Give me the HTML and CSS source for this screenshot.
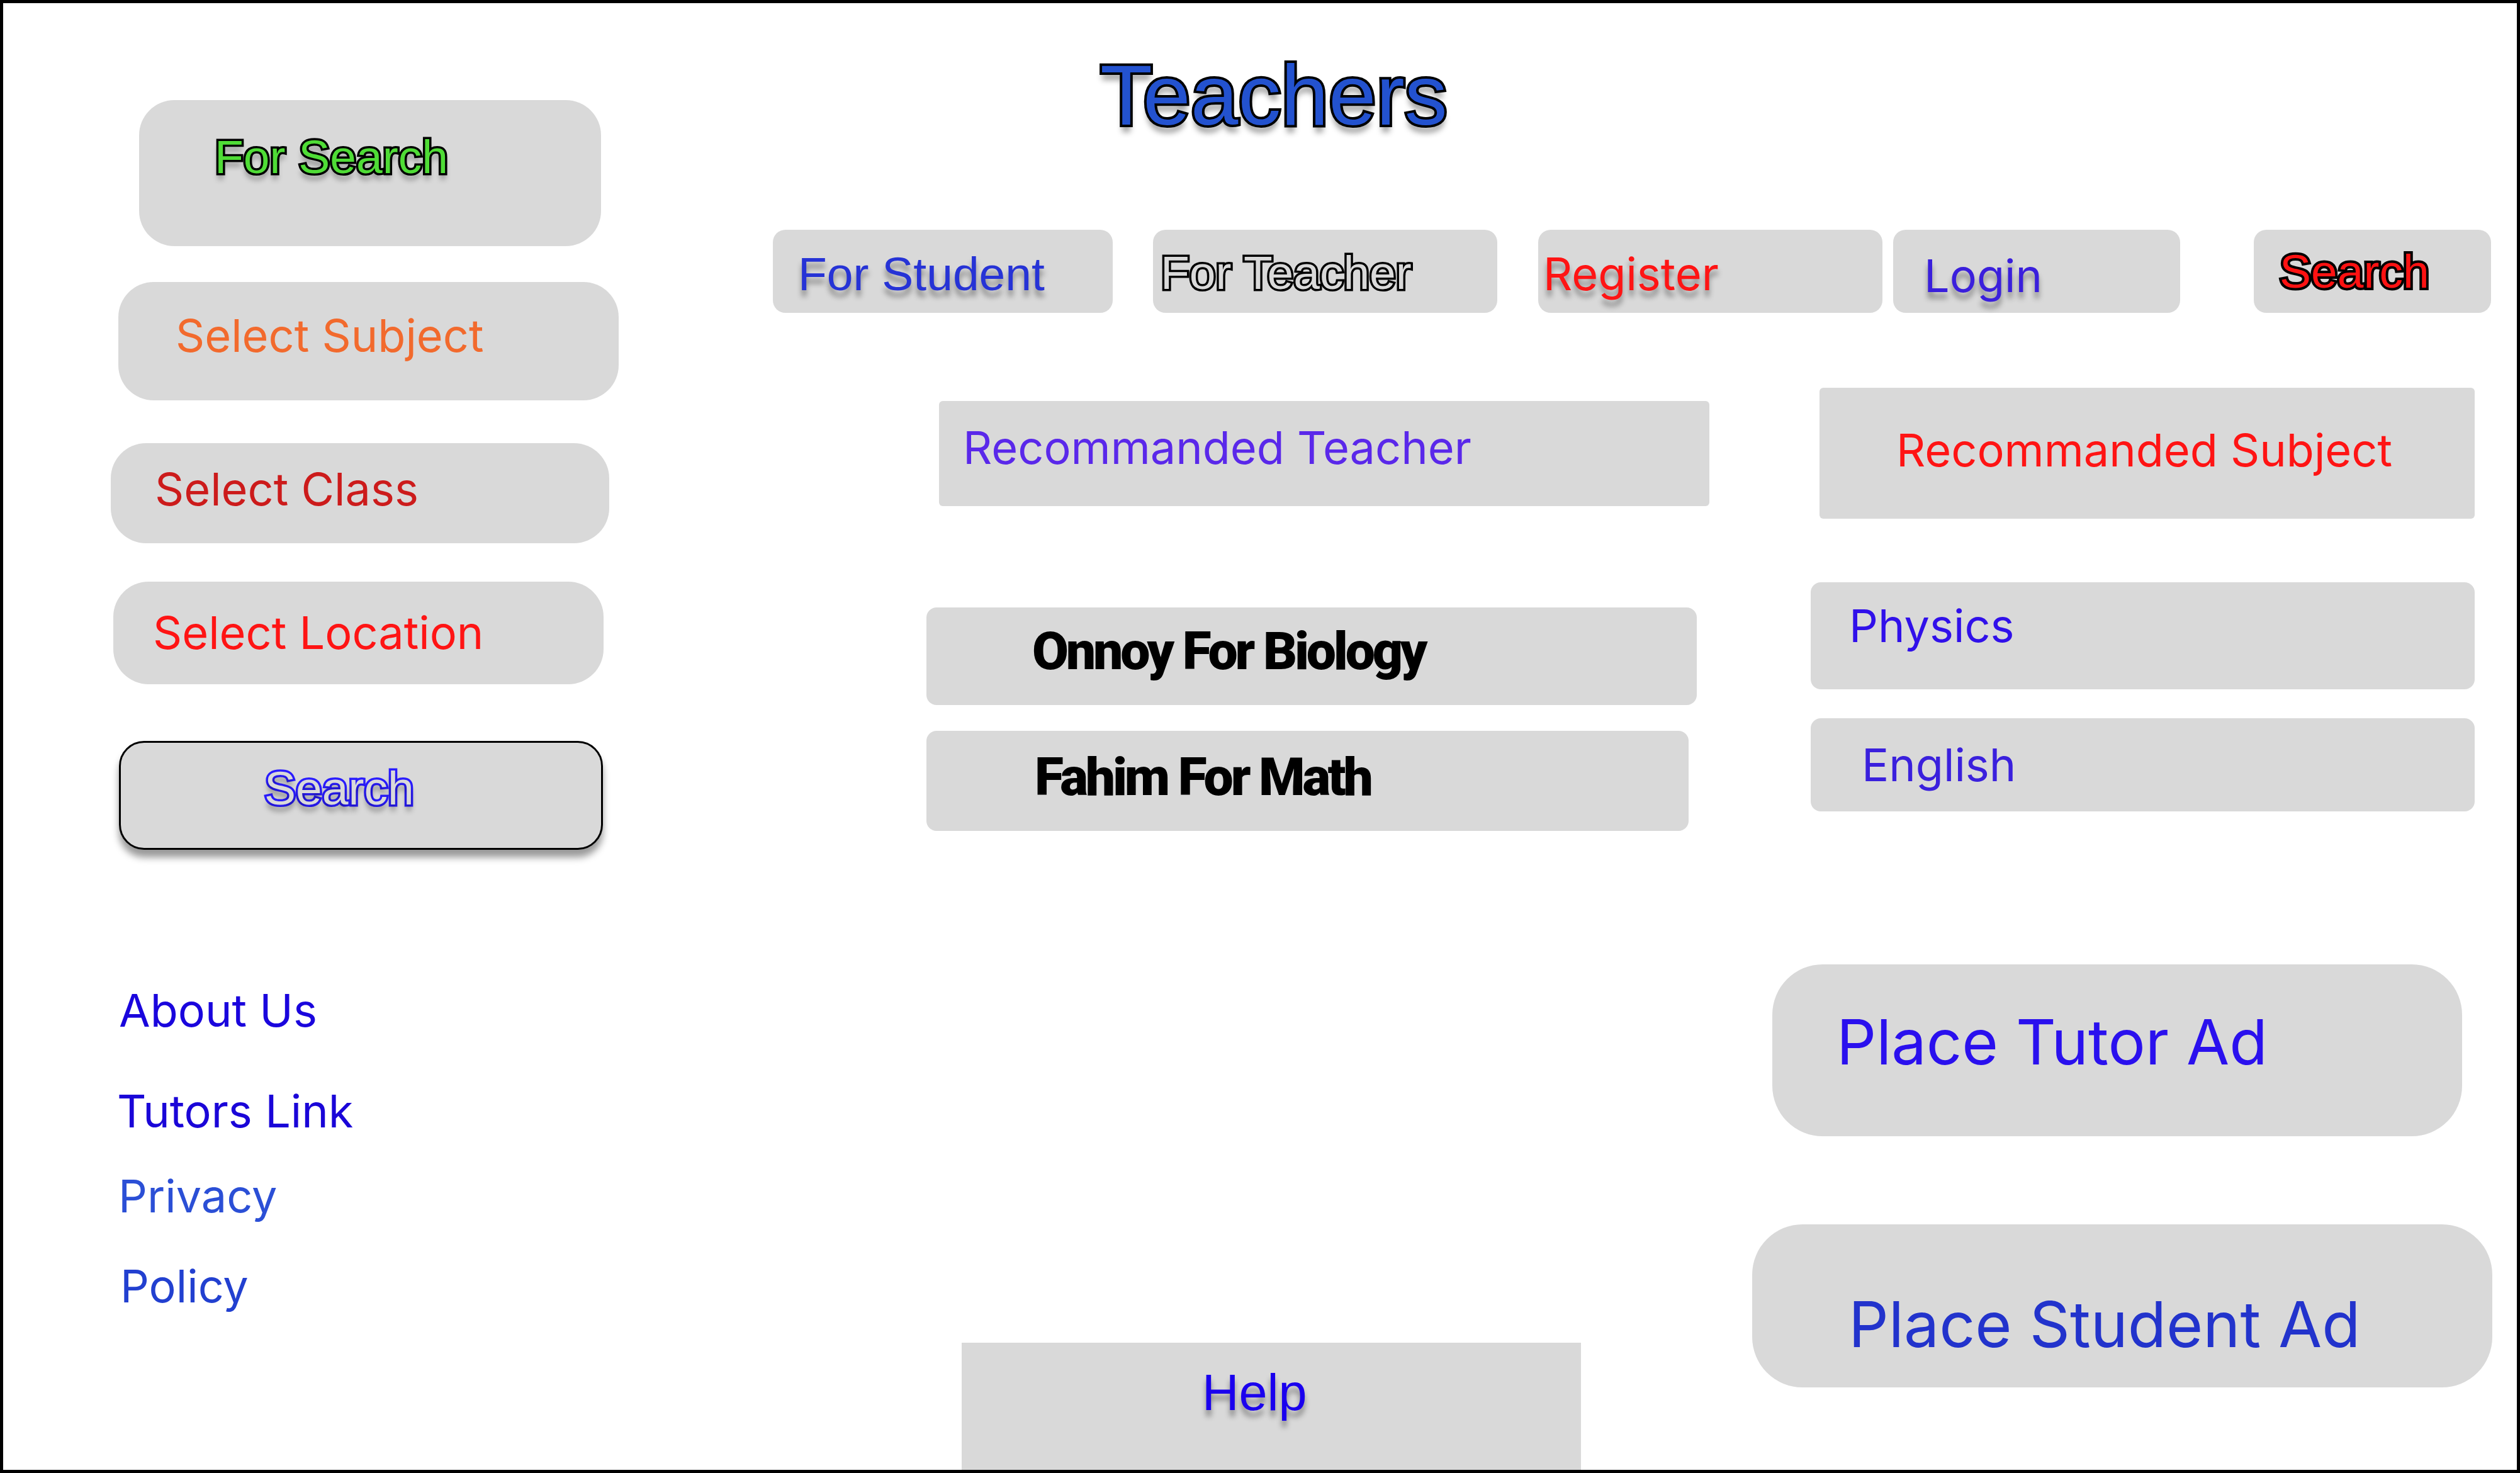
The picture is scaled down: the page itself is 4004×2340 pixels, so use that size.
FILE: index.html
```html
<!DOCTYPE html>
<html lang="en">
<head>
<meta charset="utf-8">
<title>Teachers</title>
<link rel="stylesheet" href="styles.css">
</head>
<body>
<div class="frame">
  <aside class="sidebar">
    <div class="box pill for-search"><span class="t arial outline-black green shadow">For Search</span></div>
    <div class="box pill sel-subject"><span class="t inter orange">Select Subject</span></div>
    <div class="box pill sel-class"><span class="t inter darkred">Select Class</span></div>
    <div class="box pill sel-location"><span class="t inter red">Select Location</span></div>
    <div class="box search-btn"><span class="t arial outline-blue shadow">Search</span></div>
    <nav class="links">
      <a class="link about">About Us</a>
      <a class="link tutors">Tutors Link</a>
      <a class="link privacy">Privacy</a>
      <a class="link policy">Policy</a>
    </nav>
  </aside>

  <main class="main">
    <h1 class="title">Teachers</h1>

    <div class="navrow">
      <div class="box tab tab-student"><span class="t arial blue shadow">For Student</span></div>
      <div class="box tab tab-teacher"><span class="t arial outline-black-thin">For Teacher</span></div>
      <div class="box tab tab-register"><span class="t inter red shadow">Register</span></div>
      <div class="box tab tab-login"><span class="t inter login shadow">Login</span></div>
      <div class="box tab tab-search"><span class="t arial outline-red">Search</span></div>
    </div>

    <div class="content">
      <section class="col-teachers">
        <div class="box rec-teacher"><span class="t inter purple">Recommanded Teacher</span></div>
        <div class="box card onnoy"><span class="t heavy">Onnoy For Biology</span></div>
        <div class="box card fahim"><span class="t heavy">Fahim For Math</span></div>
      </section>
      <section class="col-subjects">
        <div class="box rec-subject"><span class="t inter red">Recommanded Subject</span></div>
        <div class="box card physics"><span class="t inter subj1">Physics</span></div>
        <div class="box card english"><span class="t inter subj2">English</span></div>
      </section>
    </div>

    <div class="bottom">
      <div class="box help"><span class="t arial help-text shadow">Help</span></div>
      <div class="ads">
        <div class="box ad tutor-ad"><span class="t inter ad-text1">Place Tutor Ad</span></div>
        <div class="box ad student-ad"><span class="t inter ad-text2">Place Student Ad</span></div>
      </div>
    </div>
  </main>
</div>
</body>
</html>
```

FILE: styles.css
```css
html, body {
  margin: 0;
  padding: 0;
  background: #ffffff;
}

.frame {
  width: 4004px;
  height: 2340px;
  box-sizing: border-box;
  border: 5px solid #000000;
  background: #ffffff;
  display: flex;
  overflow: hidden;
}

/* generic */
.box {
  background: #d9d9d9;
  box-sizing: border-box;
  flex-shrink: 0;
}
.t {
  display: block;
  line-height: 1;
  white-space: nowrap;
}
.arial {
  font-family: "Liberation Sans", Arial, sans-serif;
  font-size: 75px;
}
.inter {
  font-family: Inter, "Noto Sans", sans-serif;
  font-size: 72px;
}
.heavy {
  font-family: Roboto, "Liberation Sans", sans-serif;
  font-weight: 900;
  font-size: 84px;
  letter-spacing: -0.05em;
  color: #000000;
}
.shadow {
  text-shadow: 0 10px 9px rgba(0, 0, 0, 0.38);
}

/* outlined texts */
.outline-black {
  -webkit-text-stroke: 7px #000000;
  paint-order: stroke fill;
}
.green { color: #4fdc36; }
.outline-blue {
  color: #d9d9d9;
  -webkit-text-stroke: 7px #2a1cff;
  paint-order: stroke fill;
}
.outline-black-thin {
  color: #d9d9d9;
  -webkit-text-stroke: 7px #000000;
  paint-order: stroke fill;
}
.outline-red {
  color: #ff1212;
  -webkit-text-stroke: 8px #000000;
  paint-order: stroke fill;
}

/* colours */
.orange { color: #f26a2d; }
.darkred { color: #cc1b1b; }
.red { color: #ff1414; }
.blue { color: #2633d6; }
.login { color: #3a1fdc; }
.purple { color: #5a28ea; }
.subj1 { color: #3010ea; }
.subj2 { color: #3a20dd; }

/* ---------- sidebar ---------- */
.sidebar {
  width: 1095px;
  flex-shrink: 0;
  display: flex;
  flex-direction: column;
  align-items: flex-start;
}
.pill { border-radius: 56px; }

.for-search {
  margin: 154px 0 0 216px;
  width: 734px;
  height: 232px;
  padding: 53px 0 0 120px;
}
.sel-subject {
  margin: 57px 0 0 183px;
  width: 795px;
  height: 188px;
  padding: 49px 0 0 91px;
}
.sel-class {
  margin: 68px 0 0 171px;
  width: 792px;
  height: 159px;
  padding: 37px 0 0 70px;
}
.sel-location {
  margin: 61px 0 0 175px;
  width: 779px;
  height: 163px;
  padding: 45px 0 0 63px;
}
.search-btn {
  margin: 90px 0 0 184px;
  width: 769px;
  height: 173px;
  border: 3px solid #000000;
  border-radius: 40px;
  padding: 35px 0 0 228px;
  box-shadow: 0 12px 12px rgba(0, 0, 0, 0.4);
}

.links {
  display: flex;
  flex-direction: column;
  align-items: flex-start;
}
.link {
  display: block;
  font-family: Inter, "Noto Sans", sans-serif;
  font-size: 72px;
  line-height: 1;
  white-space: nowrap;
}
.about { margin: 219px 0 0 184px; color: #1a05dd; }
.tutors { margin: 88px 0 0 181px; color: #1a05d8; }
.privacy { margin: 63px 0 0 183px; color: #2b4fd6; }
.policy { margin: 71px 0 0 186px; color: #2240d0; }

/* ---------- main ---------- */
.main {
  flex: 1;
  display: flex;
  flex-direction: column;
  align-items: flex-start;
}
.title {
  margin: 78px 0 0 648px;
  font-family: "Liberation Sans", Arial, sans-serif;
  font-weight: 400;
  font-size: 136px;
  line-height: 1;
  color: #2352cf;
  -webkit-text-stroke: 8px #000000;
  paint-order: stroke fill;
  text-shadow: 0 12px 10px rgba(0, 0, 0, 0.38);
}

.navrow {
  display: flex;
  margin: 146px 0 0 128px;
}
.tab {
  height: 132px;
  border-radius: 20px;
}
.tab-student { width: 540px; padding: 33px 0 0 40px; }
.tab-teacher { width: 547px; margin-left: 64px; padding: 31px 0 0 12px; }
.tab-register { width: 547px; margin-left: 65px; padding: 34px 0 0 8px; }
.tab-login { width: 456px; margin-left: 17px; padding: 37px 0 0 49px; }
.tab-search { width: 377px; margin-left: 117px; padding: 29px 0 0 41px; }

.content {
  display: flex;
  align-items: flex-start;
}
.col-teachers {
  margin-left: 372px;
  display: flex;
  flex-direction: column;
  align-items: flex-start;
}
.rec-teacher {
  margin: 140px 0 0 20px;
  width: 1224px;
  height: 167px;
  border-radius: 6px;
  padding: 38px 0 0 38px;
}
.card { border-radius: 16px; }
.onnoy {
  margin-top: 161px;
  width: 1224px;
  height: 155px;
  padding: 28px 0 0 168px;
}
.fahim {
  margin-top: 41px;
  width: 1211px;
  height: 159px;
  padding: 32px 0 0 172px;
}

.col-subjects {
  margin-left: 161px;
  display: flex;
  flex-direction: column;
  align-items: flex-start;
}
.rec-subject {
  margin: 119px 0 0 14px;
  width: 1041px;
  height: 208px;
  border-radius: 6px;
  padding: 63px 0 0 122px;
}
.physics {
  margin-top: 101px;
  width: 1055px;
  height: 170px;
  padding: 33px 0 0 61px;
}
.english {
  margin-top: 46px;
  width: 1055px;
  height: 148px;
  padding: 38px 0 0 81px;
}

.bottom {
  display: flex;
  align-items: flex-start;
}
.help {
  margin: 813px 0 0 428px;
  width: 984px;
  height: 203px;
  padding: 39px 0 0 382px;
}
.help-text {
  font-size: 81px;
  color: #1a00ee;
}
.ads {
  margin-left: 272px;
  display: flex;
  flex-direction: column;
  align-items: flex-start;
}
.ad { border-radius: 80px; }
.tutor-ad {
  margin: 212px 0 0 32px;
  width: 1096px;
  height: 273px;
  padding: 74px 0 0 102px;
}
.student-ad {
  margin-top: 140px;
  width: 1176px;
  height: 259px;
  padding: 109px 0 0 153px;
}
.ad-text1 { font-size: 99px; color: #2a10ee; }
.ad-text2 { font-size: 100px; color: #2233cc; }
```
